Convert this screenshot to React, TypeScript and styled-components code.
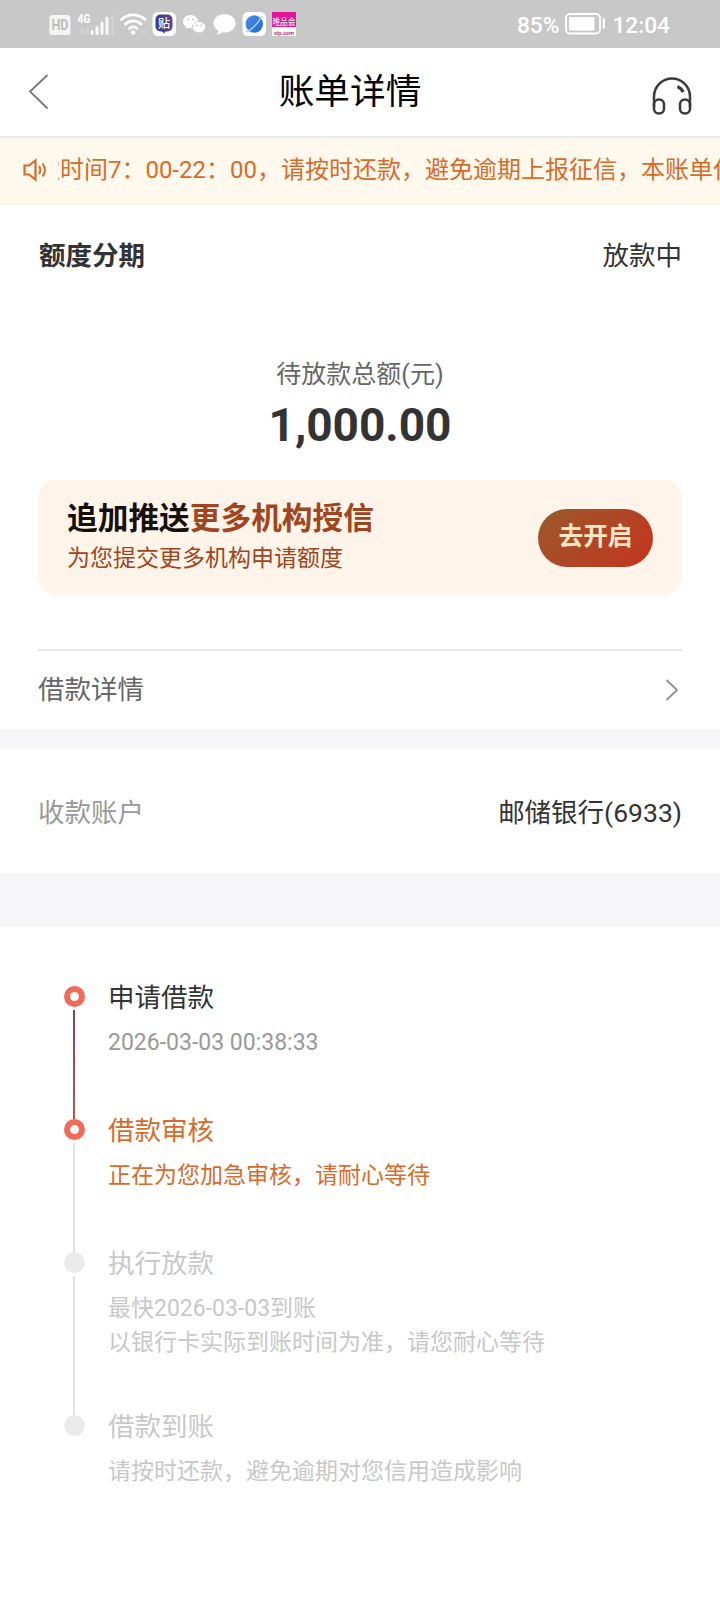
import React from 'react';
import styled, { createGlobalStyle } from 'styled-components';

const GlobalStyle = createGlobalStyle`
  * { box-sizing: border-box; }
  body {
    margin: 0;
    background: #fff;
    color: #333;
    font-family: Roboto, "Noto Sans CJK SC", sans-serif;
    font-size: 26.5px;
  }
`;

const Page = styled.main`
  display: flex;
  flex-direction: column;
  width: 720px;
  height: 1600px;
  overflow: hidden;
  background: #fff;
`;

const StatusBar = styled.div`
  display: flex;
  align-items: center;
  justify-content: space-between;
  height: 48px;
  padding: 0 50px 0 49px;
  background: #c8c8c8;
  color: #fff;
`;

const StatusText = styled.span`
  font-size: 22.7px;
  font-weight: 500;
  line-height: 46px;
  padding-top: 3px;
`;

const StatusGroup = styled.div`
  display: flex;
  align-items: center;
  gap: 6px;
`;

const NavBar = styled.header`
  display: flex;
  align-items: center;
  justify-content: space-between;
  height: 90px;
  padding: 0 28px 0 28px;
  border-bottom: 2px solid #eeebec;
`;

const NavSide = styled.div<{ $end?: boolean }>`
  display: flex;
  width: ${(p) => (p.$end ? 60 : 40)}px;
  justify-content: ${(p) => (p.$end ? 'flex-end' : 'flex-start')};
  padding-top: ${(p) => (p.$end ? 8 : 0)}px;
`;

const PageTitle = styled.h1`
  margin: 0;
  font-size: 35.7px;
  font-weight: 400;
  line-height: 88px;
  height: 88px;
  color: #000;
`;

const Notice = styled.div`
  display: flex;
  align-items: center;
  height: 67px;
  padding: 0 0 4px 23px;
  background: #fff8ec;
  color: #d76c2a;
`;

const NoticeIcon = styled.span`
  display: flex;
  width: 35px;
  padding-top: 1px;
`;

const NoticeText = styled.div`
  flex: 1;
  overflow: hidden;
  white-space: nowrap;
  font-size: 24px;
  line-height: 44px;
  text-indent: -46px;
`;

const Summary = styled.section`
  display: flex;
  flex-direction: column;
  height: 524px;
  padding: 0 38px;
`;

const Row = styled.div<{ $height: number; $drop?: number }>`
  display: flex;
  align-items: center;
  justify-content: space-between;
  height: ${(p) => p.$height}px;
  padding-top: ${(p) => p.$drop || 0}px;
`;

const Label = styled.span<{ $color?: string; $bold?: boolean }>`
  color: ${(p) => p.$color || '#333'};
  font-weight: ${(p) => (p.$bold ? 700 : 400)};
  padding-left: ${(p) => (p.$bold ? 1 : 0)}px;
  line-height: 40px;
`;

const Amount = styled.div`
  display: flex;
  flex-direction: column;
  align-items: center;
  padding-top: 52px;
`;

const AmountCaption = styled.span`
  font-size: 25px;
  line-height: 36px;
  color: #666;
`;

const AmountValue = styled.strong`
  font-size: 46px;
  line-height: 64px;
  font-weight: 700;
  color: #333;
`;

const Promo = styled.div`
  display: flex;
  align-items: center;
  justify-content: space-between;
  height: 115px;
  margin-top: 23px;
  padding: 0 29px;
  border-radius: 18px;
  background: #fff4e9;
`;

const PromoCopy = styled.div`
  display: flex;
  flex-direction: column;
  gap: 1px;
`;

const PromoTitle = styled.strong`
  font-size: 30.7px;
  line-height: 42px;
  color: #15100c;
`;

const PromoAccent = styled.span`
  color: #9f4520;
`;

const PromoSub = styled.span`
  font-size: 23px;
  line-height: 36px;
  color: #9f4520;
`;

const PromoButton = styled.button`
  width: 115px;
  height: 58px;
  padding: 0 0 2px;
  border: 0;
  border-radius: 29px;
  background: linear-gradient(135deg, #9e552b 10%, #c03820 90%);
  color: #ffe6c4;
  font: 700 24.7px/52px Roboto, "Noto Sans CJK SC", sans-serif;
`;

const Divider = styled.hr`
  width: 100%;
  height: 2px;
  margin: 54px 0 0;
  border: 0;
  background: #e8e8e8;
`;

const Gap = styled.div<{ $height: number }>`
  height: ${(p) => p.$height}px;
  background: #f6f6f8;
`;

const Account = styled.section`
  height: 124px;
  padding: 0 38px;
`;

const Timeline = styled.ol`
  display: flex;
  flex-direction: column;
  margin: 0;
  padding: 59px 0 0 64px;
  list-style: none;
`;

const Step = styled.li<{ $height: number }>`
  display: flex;
  gap: 23px;
  height: ${(p) => p.$height}px;
`;

const Rail = styled.div`
  display: flex;
  flex-direction: column;
  align-items: center;
  width: 21px;
`;

const Dot = styled.span<{ $active: boolean }>`
  width: 21px;
  height: 21px;
  border-radius: 50%;
  border: ${(p) => (p.$active ? '6px solid #f26a58' : '0')};
  background: ${(p) => (p.$active ? '#fff' : '#ebebeb')};
`;

const Line = styled.span<{ $fill: string }>`
  flex: 1;
  width: 2px;
  margin: 3px 1px 0 0;
  background: ${(p) => p.$fill};
`;

const StepBody = styled.div`
  display: flex;
  flex-direction: column;
  padding-top: 1px;
`;

const StepTitle = styled.span<{ $color: string }>`
  height: 21px;
  line-height: 21px;
  margin-bottom: 18px;
  color: ${(p) => p.$color};
`;

const StepNote = styled.span<{ $color: string }>`
  font-size: 23px;
  line-height: 34px;
  color: ${(p) => p.$color};
`;

const steps = [
  { title: '申请借款', notes: ['2026-03-03 00:38:33'], titleColor: '#333', noteColor: '#999', active: true, height: 133, line: 'linear-gradient(#923c61, #bd5550)' },
  { title: '借款审核', notes: ['正在为您加急审核，请耐心等待'], titleColor: '#d76c2a', noteColor: '#d76c2a', active: true, height: 133, line: '#e2e2e2' },
  { title: '执行放款', notes: ['最快2026-03-03到账', '以银行卡实际到账时间为准，请您耐心等待'], titleColor: '#c8c8c8', noteColor: '#c8c8c8', active: false, height: 163, line: '#e2e2e2' },
  { title: '借款到账', notes: ['请按时还款，避免逾期对您信用造成影响'], titleColor: '#c8c8c8', noteColor: '#c8c8c8', active: false, height: 80, line: '' },
];

const StatusIcons = () => (
  <svg width="250" height="30" viewBox="49 9 250 30" fill="none">
    <defs>
      <linearGradient id="forum" x1="0" y1="0" x2="1" y2="0">
        <stop offset="0" stopColor="#353b99" />
        <stop offset="1" stopColor="#66418f" />
      </linearGradient>
      <linearGradient id="globe" x1="0" y1="0" x2="1" y2="1">
        <stop offset="0" stopColor="#4b8fef" />
        <stop offset="1" stopColor="#2865cc" />
      </linearGradient>
    </defs>
    <rect x="49.500" y="15" width="21" height="20" rx="2.500" fill="#f4f4f4" />
    <text x="60" y="30" textAnchor="middle" fontSize="14" fontWeight="700" fill="#bcbcbc" textLength="17" lengthAdjust="spacingAndGlyphs">HD</text>
    <text x="77.500" y="22.500" fontSize="12" fontWeight="700" fill="#fff" textLength="13" lengthAdjust="spacingAndGlyphs">4G</text>
    <g fill="#d5d5d5">
      <path d="M82 27l-2.500 3h1.500v4h2v-4h1.500zM87 34l-2.500-3h1.500v-4h2v4h1.500z" />
    </g>
    <path d="M92 31.500V33.500M97 27.500V33.500M102 23V33.500M107 18V33.500" stroke="#f8f8f8" strokeWidth="3" strokeLinecap="round" />
    <path d="M112.500 15V35" stroke="#d3d3d3" strokeWidth="2.500" />
    <g stroke="#fff" strokeWidth="2.800" strokeLinecap="round">
      <path d="M121.500 19.500a17 17 0 0 1 23.500 0M125.500 24a11 11 0 0 1 15.500 0M129.500 28.500a5.500 5.500 0 0 1 7.500 0" />
    </g>
    <circle cx="133.200" cy="32.500" r="2.300" fill="#fff" />
    <path d="M142 30v4M146 30v4" stroke="#d0d0d0" strokeWidth="2" />
    <rect x="152.500" y="12" width="23.500" height="24" rx="5.500" fill="#fff" />
    <path d="M160.500 14.500h7a5 5 0 0 1 5 5v7a5 5 0 0 1-5 5h-2l-1.600 2-1.600-2h-1.800a5 5 0 0 1-5-5v-7a5 5 0 0 1 5-5z" fill="url(#forum)" />
    <text x="164" y="27.500" textAnchor="middle" fontSize="12" fontWeight="500" fill="#fff">贴</text>
    <path d="M190.500 15c-4.200 0-7.500 2.900-7.500 6.500 0 2.200 1.200 4 3 5.200l-.7 2.400 2.700-1.400c.8.200 1.700.3 2.500.3 4.200 0 7.500-2.900 7.500-6.500S194.700 15 190.500 15z" fill="#fff" />
    <path d="M199 21.500c-3.600 0-6.500 2.500-6.500 5.600s2.900 5.600 6.500 5.600c.8 0 1.600-.1 2.300-.4l2.200 1.300-.6-2.100c1.600-1 2.600-2.600 2.600-4.400 0-3.100-2.900-5.600-6.500-5.600z" fill="#fff" stroke="#c8c8c8" strokeWidth=".9" />
    <g fill="#c4c4c4"><circle cx="188" cy="19.500" r="1" /><circle cx="193" cy="19.500" r="1" /><circle cx="197" cy="25.500" r=".9" /><circle cx="201.200" cy="25.500" r=".9" /></g>
    <path d="M224.500 14c-6.200 0-11 4-11 9.200 0 3.200 1.800 5.800 4.700 7.400 0 1.400-.4 2.600-1.600 3.800 2.400-.1 4.300-.8 5.600-2.200.7.100 1.500.2 2.300.2 6.200 0 11-4 11-9.200s-4.800-9.200-11-9.200z" fill="#fff" />
    <rect x="242.500" y="12" width="23.500" height="24" rx="5.500" fill="#fff" />
    <circle cx="254.300" cy="24" r="8.700" fill="url(#globe)" />
    <path d="M246.500 32c5-2.500 11.500-8.500 15.500-16" stroke="#9cd7fa" strokeWidth="1.500" />
    <rect x="272" y="12" width="24" height="24" fill="#fff" />
    <rect x="272" y="12" width="24" height="15" fill="#e5149a" />
    <text x="272.400" y="24.500" fontSize="9" fontWeight="400" fill="#fff" textLength="23.200" lengthAdjust="spacingAndGlyphs">唯品会</text>
    <text x="274" y="34.500" fontSize="6" fontWeight="700" fontStyle="italic" fill="#c93482" textLength="20">vip.com</text>
  </svg>
);

const Battery = () => (
  <svg width="41" height="22" viewBox="0 0 41 22" fill="none">
    <rect x="1" y="1" width="34" height="19.500" rx="4" stroke="#fff" strokeWidth="1.800" />
    <rect x="4" y="4" width="25.500" height="13.500" rx="1" fill="#fff" />
    <path d="M38.800 5.500v10" stroke="#fff" strokeWidth="2.400" />
  </svg>
);

const BackIcon = () => (
  <svg width="22" height="36" viewBox="0 0 22 36" fill="none">
    <path d="M19.500 1L2 17.500L19.500 34.500" stroke="#777" strokeWidth="1.800" />
  </svg>
);

const HeadsetIcon = () => (
  <svg width="40" height="38" viewBox="0 0 40 38" fill="none" stroke="#3b3b3b" strokeWidth="2.500">
    <path d="M2 30V19.500a18 18 0 0 1 36 0V30" />
    <rect x="2" y="22.500" width="10" height="14" rx="4.800" />
    <rect x="28" y="22.500" width="10" height="14" rx="4.800" />
    <path d="M25.500 9.500c2.600 1.200 4.500 3.100 5.700 5.700" strokeWidth="3.200" />
  </svg>
);

const SpeakerIcon = () => (
  <svg width="24" height="24" viewBox="0 0 24 24" fill="none" stroke="#d76c2a" strokeWidth="2.200">
    <path d="M1.500 7.500H6L12.500 2.500v19L6 16.500H1.500z" />
    <path d="M16 8c1.700 2.500 1.700 5.500 0 8M19.500 5.500c3 4 3 9 0 13" strokeWidth="2" />
  </svg>
);

const ChevronIcon = () => (
  <svg width="17" height="22" viewBox="0 0 17 22" fill="none">
    <path d="M1.500 1l10.500 10L1.500 21" stroke="#909090" strokeWidth="1.800" />
  </svg>
);

export default function App() {
  return (
    <Page lang="zh-CN">
      <GlobalStyle />
      <StatusBar>
        <StatusIcons />
        <StatusGroup>
          <StatusText>85%</StatusText>
          <Battery />
          <StatusText>12:04</StatusText>
        </StatusGroup>
      </StatusBar>
      <NavBar>
        <NavSide><BackIcon /></NavSide>
        <PageTitle>账单详情</PageTitle>
        <NavSide $end><HeadsetIcon /></NavSide>
      </NavBar>
      <Notice>
        <NoticeIcon><SpeakerIcon /></NoticeIcon>
        <NoticeText>还款时间7：00-22：00，请按时还款，避免逾期上报征信，本账单仅</NoticeText>
      </Notice>
      <Summary>
        <Row $height={100} $drop={2}>
          <Label $bold>额度分期</Label>
          <Label>放款中</Label>
        </Row>
        <Amount>
          <AmountCaption>待放款总额(元)</AmountCaption>
          <AmountValue>1,000.00</AmountValue>
        </Amount>
        <Promo>
          <PromoCopy>
            <PromoTitle>追加推送<PromoAccent>更多机构授信</PromoAccent></PromoTitle>
            <PromoSub>为您提交更多机构申请额度</PromoSub>
          </PromoCopy>
          <PromoButton>去开启</PromoButton>
        </Promo>
        <Divider />
        <Row $height={78}>
          <Label $color="#666">借款详情</Label>
          <ChevronIcon />
        </Row>
      </Summary>
      <Gap $height={20} />
      <Account>
        <Row $height={124} $drop={4}>
          <Label $color="#999">收款账户</Label>
          <Label>邮储银行(6933)</Label>
        </Row>
      </Account>
      <Gap $height={54} />
      <Timeline>
        {steps.map((s) => (
          <Step key={s.title} $height={s.height}>
            <Rail>
              <Dot $active={s.active} />
              {s.line && <Line $fill={s.line} />}
            </Rail>
            <StepBody>
              <StepTitle $color={s.titleColor}>{s.title}</StepTitle>
              {s.notes.map((n) => (
                <StepNote key={n} $color={s.noteColor}>{n}</StepNote>
              ))}
            </StepBody>
          </Step>
        ))}
      </Timeline>
    </Page>
  );
}
